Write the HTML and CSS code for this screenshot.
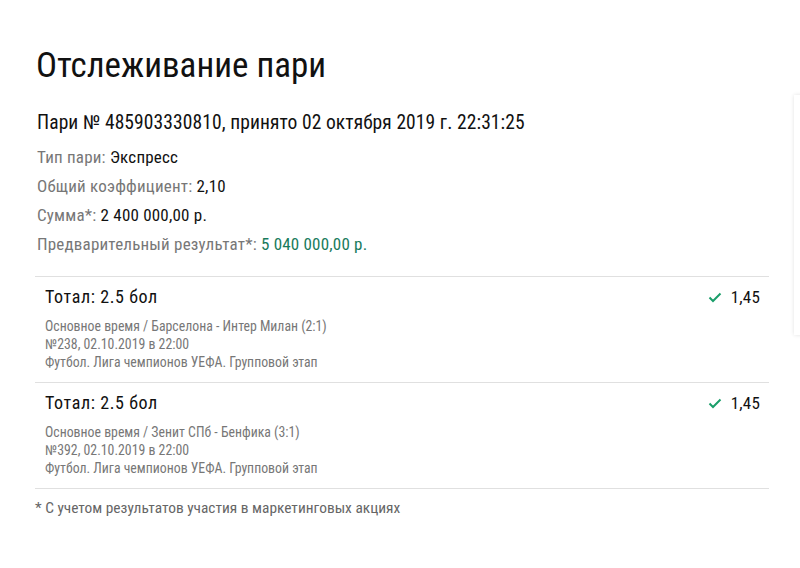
FILE: index.html
```html
<!DOCTYPE html>
<html lang="ru">
<head>
<meta charset="utf-8">
<link rel="stylesheet" href="styles.css">
</head>
<body>
<div class="page">
  <h1 class="title">Отслеживание пари</h1>
  <div class="bet-head">Пари № 485903330810, принято 02 октября 2019 г. 22:31:25</div>
  <div class="info">
    <div class="info-row"><span class="label">Тип пари:</span> Экспресс</div>
    <div class="info-row"><span class="label">Общий коэффициент:</span> 2,10</div>
    <div class="info-row"><span class="label">Сумма*:</span> 2 400 000,00 р.</div>
    <div class="info-row"><span class="label">Предварительный результат*:</span> <span class="green">5 040 000,00 р.</span></div>
  </div>
  <div class="events">
    <div class="event">
      <div class="event-top">
        <div class="event-name">Тотал: 2.5 бол</div>
        <div class="event-coef">
          <svg class="check" width="14" height="11" viewBox="0 0 14 11"><path d="M1.5 5.5 L5 9 L12.5 1.5" fill="none" stroke="#1a9e6a" stroke-width="2"/></svg>
          <span>1,45</span>
        </div>
      </div>
      <div class="event-meta">
        <div>Основное время / Барселона - Интер Милан (2:1)</div>
        <div>№238, 02.10.2019 в 22:00</div>
        <div>Футбол. Лига чемпионов УЕФА. Групповой этап</div>
      </div>
    </div>
    <div class="event">
      <div class="event-top">
        <div class="event-name">Тотал: 2.5 бол</div>
        <div class="event-coef">
          <svg class="check" width="14" height="11" viewBox="0 0 14 11"><path d="M1.5 5.5 L5 9 L12.5 1.5" fill="none" stroke="#1a9e6a" stroke-width="2"/></svg>
          <span>1,45</span>
        </div>
      </div>
      <div class="event-meta">
        <div>Основное время / Зенит СПб - Бенфика (3:1)</div>
        <div>№392, 02.10.2019 в 22:00</div>
        <div>Футбол. Лига чемпионов УЕФА. Групповой этап</div>
      </div>
    </div>
  </div>
  <div class="footnote">* С учетом результатов участия в маркетинговых акциях</div>
</div>
<div class="edge-shadow"></div>
</body>
</html>
```

FILE: styles.css
```css
html, body {
  margin: 0;
  padding: 0;
  background: #fff;
}
body {
  font-family: "Roboto Condensed", Roboto, sans-serif;
  color: #111;
}
.page {
  padding: 44px 31px 0 35px;
}
.title {
  margin: 0 0 0 1px;
  font-size: 35px;
  font-weight: 400;
  line-height: 44px;
}
.bet-head {
  margin-top: 23px;
  font-size: 19.5px;
  letter-spacing: 0.1px;
  line-height: 24px;
  padding-left: 2px;
}
.info {
  margin-top: 8px;
  padding-left: 2px;
  margin-bottom: 17px;
}
.info-row {
  font-size: 17px;
  letter-spacing: 0.2px;
  line-height: 29px;
}
.label {
  color: #777;
}
.green {
  color: #187a5c;
}
.events {
  border-top: 1px solid #e0e0e0;
}
.event {
  border-bottom: 1px solid #e0e0e0;
  padding: 9px 9px 11px 10px;
}
.event-top {
  display: flex;
  justify-content: space-between;
  align-items: center;
  font-size: 18px;
  letter-spacing: 0.6px;
  line-height: 22px;
}
.event-coef {
  display: flex;
  align-items: center;
  gap: 9px;
  font-size: 17px;
  letter-spacing: 0.2px;
}
.event-meta {
  margin-top: 9px;
  font-size: 13.8px;
  line-height: 18px;
  color: #777;
}
.footnote {
  margin-top: 10px;
  font-size: 15.4px;
  line-height: 18px;
  color: #666;
}
.edge-shadow {
  position: absolute;
  left: 794px;
  top: 95px;
  width: 20px;
  height: 240px;
  box-shadow: 0 0 4px rgba(0,0,0,0.12);
  background: #fff;
}
```
